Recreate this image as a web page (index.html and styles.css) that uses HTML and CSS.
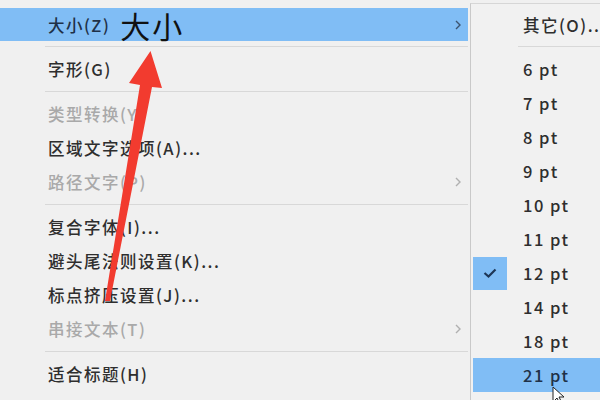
FILE: index.html
```html
<!DOCTYPE html>
<html lang="zh-CN">
<head>
<meta charset="utf-8">
<link rel="stylesheet" href="styles.css">
</head>
<body>
<div class="screen">
  <div class="menu">
    <div class="row active"><span class="label">大小(Z)<span class="big">大小</span></span><svg class="chev" viewBox="0 0 6 10"><path d="M1 1l4 4-4 4" /></svg></div>
    <div class="sep"></div>
    <div class="row"><span class="label">字形(G)</span></div>
    <div class="sep"></div>
    <div class="row dis"><span class="label">类型转换(Y)</span></div>
    <div class="row"><span class="label">区域文字选项(A)...</span></div>
    <div class="row dis"><span class="label">路径文字(P)</span><svg class="chev" viewBox="0 0 6 10"><path d="M1 1l4 4-4 4" /></svg></div>
    <div class="sep"></div>
    <div class="row"><span class="label">复合字体(I)...</span></div>
    <div class="row"><span class="label">避头尾法则设置(K)...</span></div>
    <div class="row"><span class="label">标点挤压设置(J)...</span></div>
    <div class="row dis"><span class="label">串接文本(T)</span><svg class="chev" viewBox="0 0 6 10"><path d="M1 1l4 4-4 4" /></svg></div>
    <div class="sep"></div>
    <div class="row"><span class="label">适合标题(H)</span></div>
    <div class="row"><span class="label">解决缺失字体(R)...</span></div>
  </div>
  <div class="submenu">
    <div class="srow first"><span class="check"></span><span class="slabel">其它(O)...</span></div>
    <div class="ssep"></div>
    <div class="srow"><span class="check"></span><span class="slabel">6 pt</span></div>
    <div class="srow"><span class="check"></span><span class="slabel">7 pt</span></div>
    <div class="srow"><span class="check"></span><span class="slabel">8 pt</span></div>
    <div class="srow"><span class="check"></span><span class="slabel">9 pt</span></div>
    <div class="srow"><span class="check"></span><span class="slabel">10 pt</span></div>
    <div class="srow"><span class="check"></span><span class="slabel">11 pt</span></div>
    <div class="srow"><span class="check on"><svg viewBox="0 0 14 10"><path d="M1.5 5l4 3.5 7-7" /></svg></span><span class="slabel">12 pt</span></div>
    <div class="srow"><span class="check"></span><span class="slabel">14 pt</span></div>
    <div class="srow"><span class="check"></span><span class="slabel">18 pt</span></div>
    <div class="srow hot"><span class="check"></span><span class="slabel">21 pt</span></div>
    <div class="srow"><span class="check"></span><span class="slabel">24 pt</span></div>
  </div>
  <svg class="arrow" viewBox="0 0 600 400">
    <polygon points="150.5,51 129,83 140,85 105,301 110,301 152,87 162,88" />
  </svg>
  <svg class="cursor" viewBox="0 0 12 18">
    <path d="M1 1v15l4-4 3 6 2-1-3-6h5z" />
  </svg>
</div>
</body>
</html>
```
FILE: styles.css
```css
* { box-sizing: border-box; }
html, body { margin: 0; padding: 0; }
body {
  width: 600px;
  height: 400px;
  overflow: hidden;
  background: #f0f0f0;
  font-family: "Noto Sans CJK SC", "Noto Sans", sans-serif;
}
.screen {
  position: relative;
  display: flex;
  width: 600px;
  height: 400px;
  overflow: hidden;
  background: #f0f0f0;
}
.menu {
  width: 470px;
  flex: none;
  padding-top: 8px;
  padding-right: 2px;
}
.row {
  display: flex;
  align-items: center;
  height: 34px;
  padding-left: 48px;
  padding-right: 7px;
  font-size: 16.5px;
  font-weight: 500;
  letter-spacing: 1.5px;
  color: #2e2e2e;
}
.row.active {
  height: 33px;
  background: #80bdf5;
  color: #1f3148;
}
.row.dis { color: #a9a9a9; }
.label { flex: 1; white-space: nowrap; display: flex; align-items: center; }
.big {
  margin-left: 10px;
  font-size: 30px;
  font-weight: 400;
  letter-spacing: 2px;
  color: #111;
  line-height: 1;
}
.chev {
  width: 6px;
  height: 10px;
  fill: none;
  stroke: #3c5470;
  stroke-width: 1.4;
}
.row.dis .chev { stroke: #b0b0b0; }
.sep {
  height: 11px;
  display: flex;
  align-items: center;
  padding-left: 45px;
}
.sep::after {
  content: "";
  flex: 1;
  height: 1px;
  background: #d8d8d8;
}
.submenu {
  flex: 1;
  margin-top: 3px;
  border-left: 1px solid #c9c9c9;
  border-top: 1px solid #d6d6d6;
  padding-top: 4px;
  padding-left: 2px;
  background: #f1f1f1;
}
.srow {
  display: flex;
  align-items: center;
  height: 34px;
  font-size: 16.5px;
  font-weight: 500;
  letter-spacing: 1.5px;
  color: #2e2e2e;
  white-space: nowrap;
}
.srow.first { height: 33px; }
.srow.hot { background: #80bdf5; color: #1f3148; }
.check {
  width: 34px;
  height: 33px;
  flex: none;
  display: flex;
  align-items: center;
  justify-content: center;
}
.check.on { background: #80bdf5; }
.check svg {
  width: 14px;
  height: 10px;
  fill: none;
  stroke: #1d3656;
  stroke-width: 2.2;
}
.slabel { margin-left: 16px; }
.ssep {
  height: 11px;
  display: flex;
  align-items: center;
  padding-left: 45px;
}
.ssep::after {
  content: "";
  flex: 1;
  height: 1px;
  background: #d8d8d8;
}
.arrow {
  position: absolute;
  left: 0;
  top: 0;
  width: 600px;
  height: 400px;
  pointer-events: none;
}
.arrow polygon { fill: #f23b2f; }
.cursor {
  position: absolute;
  left: 552px;
  top: 386px;
  width: 12px;
  height: 18px;
}
.cursor path { fill: #fff; stroke: #222; stroke-width: 1; }
```
